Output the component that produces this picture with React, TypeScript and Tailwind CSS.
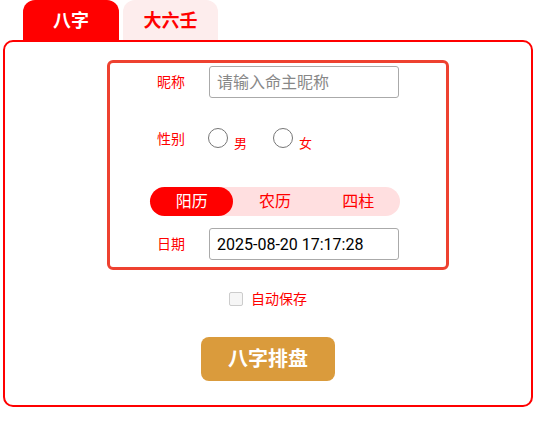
import { useState } from 'react';

const FONT = "font-['Roboto','Noto_Sans_CJK_SC',sans-serif]";

function Radio({ label, checked, onClick }: { label: string; checked: boolean; onClick: () => void }) {
  return (
    <button type="button" onClick={onClick} className="flex items-start gap-[6px]">
      <span className="w-[20px] h-[20px] rounded-full border border-[#767676] bg-white flex items-center justify-center">
        {checked && <span className="w-[10px] h-[10px] rounded-full bg-[#1a73e8]" />}
      </span>
      <span className="text-[13px] leading-[13px] text-[#ff0000] mt-[9px]">{label}</span>
    </button>
  );
}

export default function App() {
  const [tab, setTab] = useState(0);
  const [calendar, setCalendar] = useState(0);
  const [gender, setGender] = useState<number | null>(null);
  const [autoSave, setAutoSave] = useState(false);

  const tabs = ['八字', '大六壬'];
  const calendars = ['阳历', '农历', '四柱'];

  return (
    <div className={`${FONT} w-[535px] h-[429px] bg-white`}>
      {/* Tabs */}
      <div className="flex gap-[4px] pl-[23px] h-[40px]">
        {tabs.map((t, i) => (
          <button
            key={t}
            type="button"
            onClick={() => setTab(i)}
            className={
              i === tab
                ? 'w-[96px] h-[40px] rounded-t-[12px] bg-[#ff0000] text-white text-[18px] font-bold'
                : 'w-[95px] h-[40px] rounded-t-[12px] bg-[#fdeded] text-[#ff0000] text-[18px] font-bold'
            }
          >
            {t}
          </button>
        ))}
      </div>

      {/* Main panel */}
      <div className="ml-[3px] w-[530px] h-[367px] border-2 border-[#ff0000] rounded-[10px] flex flex-col">
        {/* Form box */}
        <div className="ml-[102px] mt-[18px] w-[342px] border-[3px] border-[#ee4130] rounded-[6px] pt-[3px] pb-[7px]">
          <div className="flex items-center h-[32px]">
            <span className="ml-[30px] w-[62px] text-center text-[14px] text-[#ff0000]">昵称</span>
            <input
              placeholder="请输入命主昵称"
              className="ml-[7px] w-[190px] h-[32px] border border-[#aaaaaa] rounded-[3px] px-[7px] text-[16px] text-black placeholder:text-[#888888] outline-none"
            />
          </div>

          <div className="flex items-start h-[22px] mt-[30px]">
            <span className="ml-[30px] w-[62px] text-center text-[14px] leading-[22px] text-[#ff0000]">性别</span>
            <div className="ml-[6px] flex gap-[26px]">
              <Radio label="男" checked={gender === 0} onClick={() => setGender(0)} />
              <Radio label="女" checked={gender === 1} onClick={() => setGender(1)} />
            </div>
          </div>

          <div className="ml-[40px] mt-[37px] w-[250px] h-[29px] rounded-full bg-[#ffdfe0] flex">
            {calendars.map((c, i) => (
              <button
                key={c}
                type="button"
                onClick={() => setCalendar(i)}
                className={
                  i === calendar
                    ? 'flex-1 rounded-full bg-[#ff0000] text-white text-[16px]'
                    : 'flex-1 rounded-full text-[#ff0000] text-[16px]'
                }
              >
                {c}
              </button>
            ))}
          </div>

          <div className="flex items-center h-[32px] mt-[12px]">
            <span className="ml-[30px] w-[62px] text-center text-[14px] text-[#ff0000]">日期</span>
            <input
              defaultValue="2025-08-20 17:17:28"
              className="ml-[7px] w-[190px] h-[32px] border border-[#aaaaaa] rounded-[3px] px-[7px] text-[16px] text-black outline-none"
            />
          </div>
        </div>

        {/* Auto save */}
        <label className="mt-[19px] h-[20px] self-center flex items-center gap-[8px] cursor-pointer">
          <input
            type="checkbox"
            checked={autoSave}
            onChange={(e) => setAutoSave(e.target.checked)}
            className="appearance-none w-[14px] h-[14px] border border-[#cccccc] rounded-[2px] bg-[#f6f6f6] checked:bg-[#ff0000]"
          />
          <span className="text-[14px] leading-[20px] text-[#ff0000]">自动保存</span>
        </label>

        {/* Submit */}
        <button
          type="button"
          className="mt-[28px] self-center w-[134px] h-[44px] rounded-[8px] bg-[#da9b3c] text-white text-[20px] font-bold"
        >
          八字排盘
        </button>
      </div>
    </div>
  );
}
